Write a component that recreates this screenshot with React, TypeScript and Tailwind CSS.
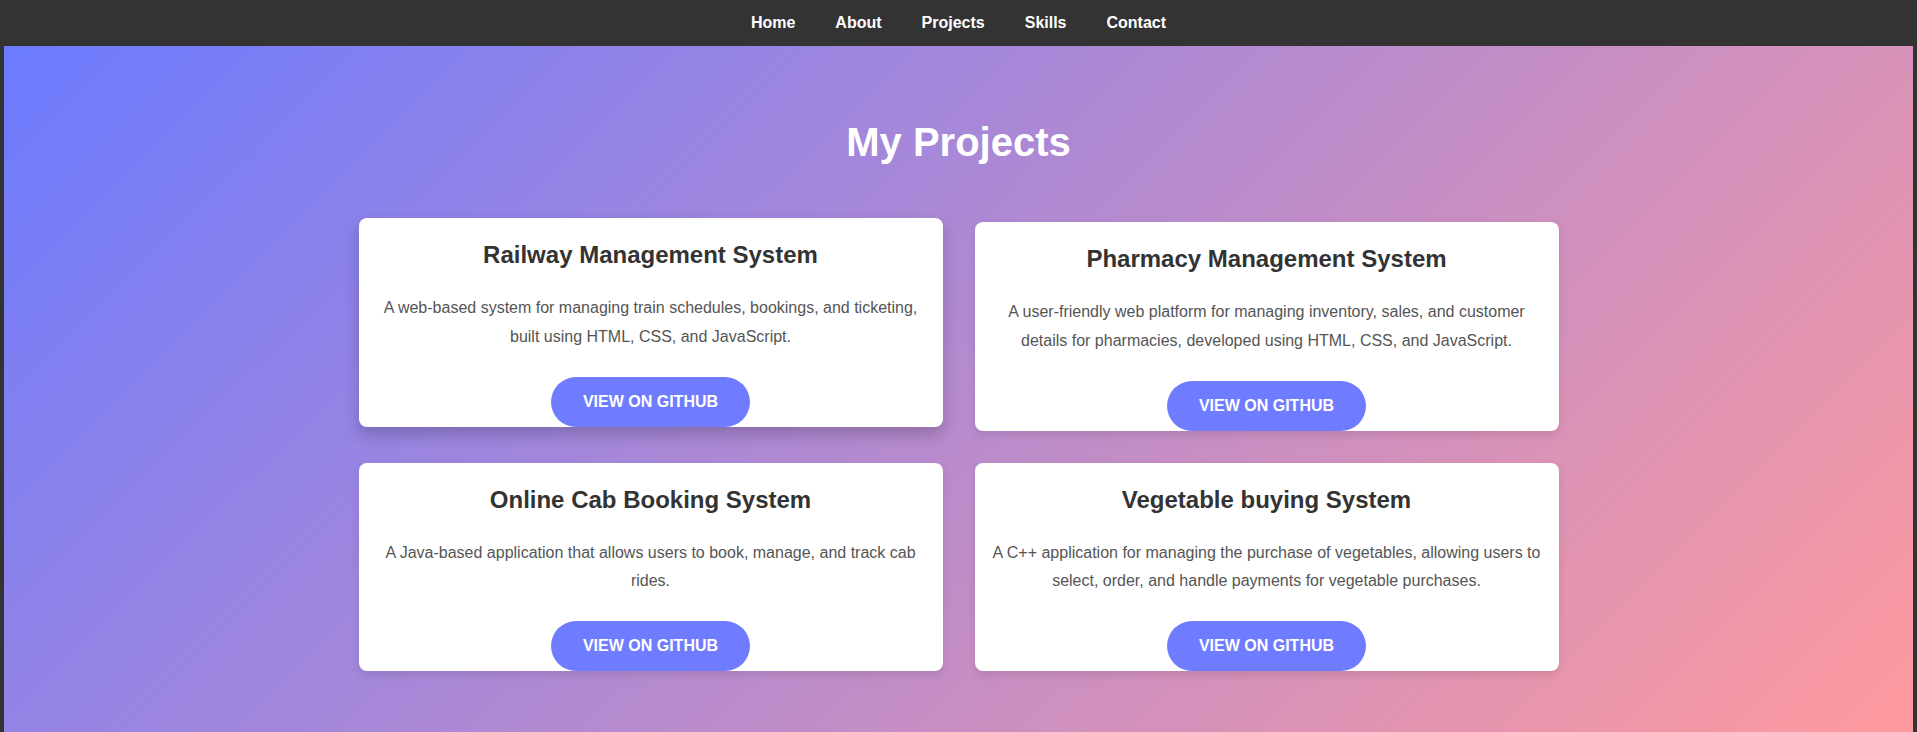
import React from "react";

const projects = [
  {
    title: "Railway Management System",
    desc: "A web-based system for managing train schedules, bookings, and ticketing, built using HTML, CSS, and JavaScript.",
    hovered: true,
  },
  {
    title: "Pharmacy Management System",
    desc: "A user-friendly web platform for managing inventory, sales, and customer details for pharmacies, developed using HTML, CSS, and JavaScript.",
    hovered: false,
  },
  {
    title: "Online Cab Booking System",
    desc: "A Java-based application that allows users to book, manage, and track cab rides.",
    hovered: false,
  },
  {
    title: "Vegetable buying System",
    desc: "A C++ application for managing the purchase of vegetables, allowing users to select, order, and handle payments for vegetable purchases.",
    hovered: false,
  },
];

export default function App() {
  return (
    <div className="min-h-screen flex flex-col bg-[#333] font-['Liberation_Sans',Arial,sans-serif]">
      <nav className="h-[46px] flex items-center justify-center gap-10 bg-[#333]">
        {["Home", "About", "Projects", "Skills", "Contact"].map((n) => (
          <a key={n} href="#" className="text-white font-bold text-[16px] leading-[20px]">
            {n}
          </a>
        ))}
      </nav>
      <section className="flex-1 mx-1 bg-[linear-gradient(135deg,#6c7bff,#ff9a9e)] pt-[73px] pb-[60px]">
        <h2 className="text-center text-white font-bold text-[40px] leading-[46px] mb-[57px]">
          My Projects
        </h2>
        <div className="w-[1200px] mx-auto grid grid-cols-2 gap-x-[32px] gap-y-[32px]">
          {projects.map((p) => (
            <div
              key={p.title}
              className={
                p.hovered
                  ? "bg-white rounded-[8px] pt-[23px] px-[15px] flex flex-col items-center text-center -translate-y-[4px] shadow-[0_8px_16px_rgba(0,0,0,0.2)]"
                  : "bg-white rounded-[8px] pt-[23px] px-[15px] flex flex-col items-center text-center shadow-[0_4px_8px_rgba(0,0,0,0.1)]"
              }
            >
              <h3 className="text-[#333] font-bold text-[24px] leading-[28px]">{p.title}</h3>
              <p className="mt-[25px] text-[#555] text-[16px] leading-[28.8px]">{p.desc}</p>
              <a
                href="#"
                className="mt-[25px] h-[50px] px-8 rounded-full bg-[#6f7cff] text-white font-bold text-[16px] flex items-center"
              >
                VIEW ON GITHUB
              </a>
            </div>
          ))}
        </div>
      </section>
    </div>
  );
}
